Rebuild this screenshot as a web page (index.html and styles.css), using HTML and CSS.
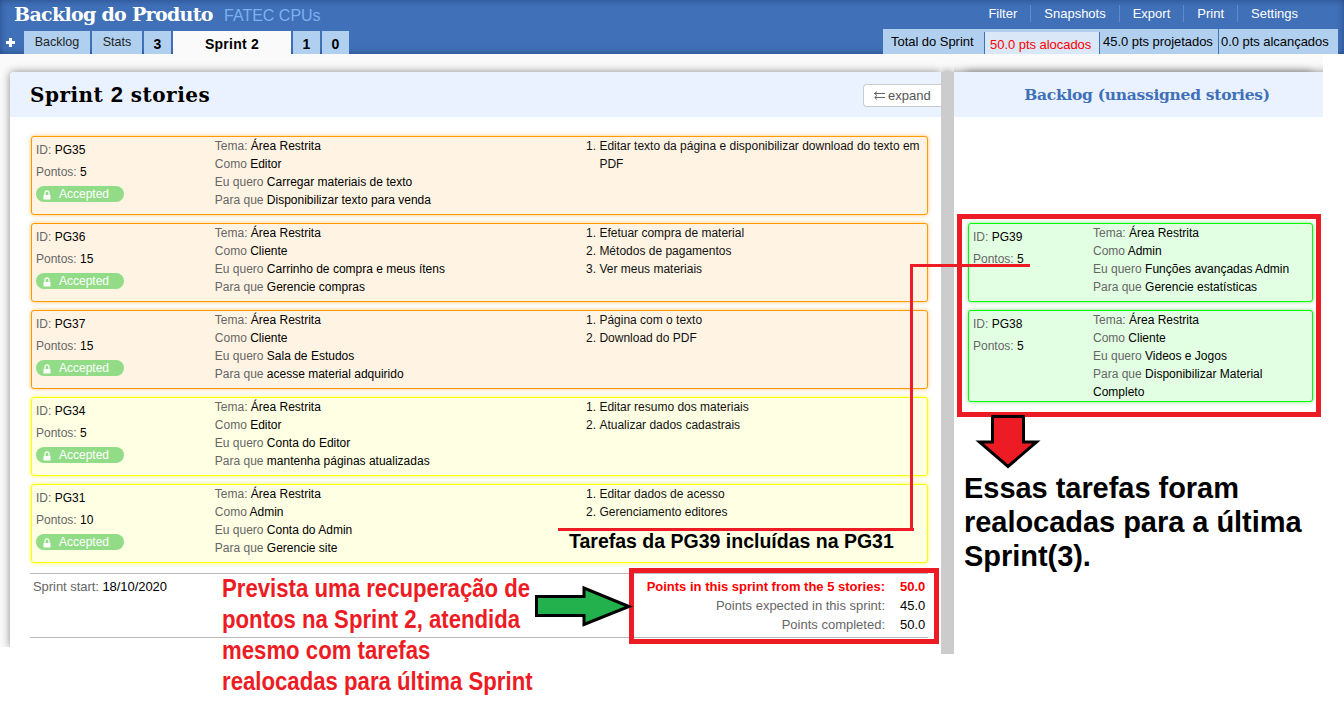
FILE: index.html
```html
<!DOCTYPE html>
<html lang="pt-BR">
<head>
<meta charset="utf-8">
<title>Backlog do Produto</title>
<link rel="stylesheet" href="styles.css">
</head>
<body>
<svg class="defs" width="0" height="0"><symbol id="lock" viewBox="0 0 8 10"><path d="M2 5V3.2C2 1.8 2.8 1 4 1s2 .8 2 2.2V5" fill="none" stroke="#fff" stroke-opacity=".85" stroke-width="1.5"/><path d="M.5 5h7v4.500h-7z" fill="#fff"/></symbol></svg>
<header class="header">
  <div class="top">
    <h1 class="title">Backlog do Produto</h1><span class="project">FATEC CPUs</span>
    <nav class="menu"><a>Filter</a><a>Snapshots</a><a>Export</a><a>Print</a><a>Settings</a></nav>
  </div>
  <div class="bar">
    <div class="tabs">
      <span class="add"><svg width="9" height="9" viewBox="0 0 9 9"><path d="M0 4.5h9M4.5 0v9" stroke="#fff" stroke-width="3"/></svg></span>
      <span class="tab backlog-tab">Backlog</span><span class="tab stats-tab">Stats</span><span class="tab num">3</span><span class="tab current">Sprint 2</span><span class="tab num">1</span><span class="tab num">0</span>
    </div>
    <div class="totals"><span class="total label">Total do Sprint</span><span class="total allocated">50.0 pts alocados</span><span class="total projected">45.0 pts projetados</span><span class="total reached">0.0 pts alcançados</span></div>
  </div>
</header>
<main class="workspace">
  <section class="sprint">
    <div class="panel-head"><h2 class="heading">Sprint <span class="digit">2</span> stories</h2><span class="expand"><svg width="11" height="9" viewBox="0 0 11 9"><path d="M0 2.5h11M1 6.5h10M3 .5L.7 2.5 3 4.5M3 4.5L.7 6.5 3 8.5" fill="none" stroke="#666"/></svg>expand</span></div>
    <div class="stories">
      <article class="card orange"><div class="meta"><p>ID: <b>PG35</b></p><p>Pontos: <b>5</b></p><span class="badge"><svg width="8" height="10"><use href="#lock"/></svg>Accepted</span></div><div class="story"><p>Tema: <b>Área Restrita</b></p><p>Como <b>Editor</b></p><p>Eu quero <b>Carregar materiais de texto</b></p><p>Para que <b>Disponibilizar texto para venda</b></p></div><ol class="criteria"><li>Editar texto da página e disponibilizar download do texto em PDF</li></ol></article>
      <article class="card orange"><div class="meta"><p>ID: <b>PG36</b></p><p>Pontos: <b>15</b></p><span class="badge"><svg width="8" height="10"><use href="#lock"/></svg>Accepted</span></div><div class="story"><p>Tema: <b>Área Restrita</b></p><p>Como <b>Cliente</b></p><p>Eu quero <b>Carrinho de compra e meus ítens</b></p><p>Para que <b>Gerencie compras</b></p></div><ol class="criteria"><li>Efetuar compra de material</li><li>Métodos de pagamentos</li><li>Ver meus materiais</li></ol></article>
      <article class="card orange"><div class="meta"><p>ID: <b>PG37</b></p><p>Pontos: <b>15</b></p><span class="badge"><svg width="8" height="10"><use href="#lock"/></svg>Accepted</span></div><div class="story"><p>Tema: <b>Área Restrita</b></p><p>Como <b>Cliente</b></p><p>Eu quero <b>Sala de Estudos</b></p><p>Para que <b>acesse material adquirido</b></p></div><ol class="criteria"><li>Página com o texto</li><li>Download do PDF</li></ol></article>
      <article class="card yellow"><div class="meta"><p>ID: <b>PG34</b></p><p>Pontos: <b>5</b></p><span class="badge"><svg width="8" height="10"><use href="#lock"/></svg>Accepted</span></div><div class="story"><p>Tema: <b>Área Restrita</b></p><p>Como <b>Editor</b></p><p>Eu quero <b>Conta do Editor</b></p><p>Para que <b>mantenha páginas atualizadas</b></p></div><ol class="criteria"><li>Editar resumo dos materiais</li><li>Atualizar dados cadastrais</li></ol></article>
      <article class="card yellow"><div class="meta"><p>ID: <b>PG31</b></p><p>Pontos: <b>10</b></p><span class="badge"><svg width="8" height="10"><use href="#lock"/></svg>Accepted</span></div><div class="story"><p>Tema: <b>Área Restrita</b></p><p>Como <b>Admin</b></p><p>Eu quero <b>Conta do Admin</b></p><p>Para que <b>Gerencie site</b></p></div><ol class="criteria"><li>Editar dados de acesso</li><li>Gerenciamento editores</li></ol></article>
    </div>
    <footer class="summary">
      <p class="start">Sprint start: <b>18/10/2020</b></p>
      <div class="points"><span class="over">Points in this sprint from the 5 stories:</span><strong class="over">50.0</strong><span>Points expected in this sprint:</span><b>45.0</b><span>Points completed:</span><b>50.0</b></div>
    </footer>
  </section>
  <div class="splitter"></div>
  <section class="backlog">
    <div class="panel-head side"><h2 class="side-heading">Backlog (unassigned stories)</h2></div>
    <div class="unassigned">
      <article class="card green"><div class="meta"><p>ID: <b>PG39</b></p><p>Pontos: <b>5</b></p></div><div class="story"><p>Tema: <b>Área Restrita</b></p><p>Como <b>Admin</b></p><p>Eu quero <b>Funções avançadas Admin</b></p><p>Para que <b>Gerencie estatísticas</b></p></div></article>
      <article class="card green tall"><div class="meta"><p>ID: <b>PG38</b></p><p>Pontos: <b>5</b></p></div><div class="story"><p>Tema: <b>Área Restrita</b></p><p>Como <b>Cliente</b></p><p>Eu quero <b>Videos e Jogos</b></p><p>Para que <b>Disponibilizar Material</b></p><p><b>Completo</b></p></div></article>
    </div>
  </section>
</main>
<svg class="marks" width="1344" height="721" viewBox="0 0 1344 721">
  <g fill="none" stroke="#ed1c24">
    <path d="M959.5 216.5h359v198h-359z" stroke-width="5"/>
    <path d="M631.5 570.5h305v71h-305z" stroke-width="5"/>
    <path d="M1030 265.500H911.500V529.500M914 529.500H558" stroke-width="3"/>
  </g>
  <path d="M992.500 416.500h31v25.500h13l-28.500 24.500-28.500-24.500h13z" fill="#ed1c24" stroke="#000" stroke-width="3"/>
  <path d="M536.500 596.500h47.500v-8.500l45 18.500-45 18v-9h-47.500z" fill="#22b14c" stroke="#000" stroke-width="3"/>
</svg>
<p class="note moved"><span>Essas tarefas foram</span><br><span>realocadas para a última</span><br><span>Sprint(3).</span></p>
<p class="note included">Tarefas da PG39 incluídas na PG31</p>
<p class="note recovery">Prevista uma recuperação de<br>pontos na Sprint 2, atendida<br>mesmo com tarefas<br>realocadas para última Sprint</p>
</body>
</html>
```
FILE: styles.css
```css
* { box-sizing: border-box; }
body { margin: 0; width: 1344px; height: 721px; overflow: hidden; position: relative; background: #fff; font: 12px/18px "Liberation Sans", Arial, sans-serif; color: #000; }
h1, h2, p, ol { margin: 0; padding: 0; }
b { font-weight: normal; color: #000; }
.defs { position: absolute; }
.header { height: 54px; background: #4070b8; box-shadow: inset 0 0 7px rgba(20, 45, 95, .6); display: flex; flex-direction: column; justify-content: space-between; }
.top { display: flex; height: 29px; align-items: center; padding-left: 14px; color: #fff; }
.title { font: bold 19px/29px "DejaVu Serif", serif; width: 210px; white-space: nowrap; letter-spacing: -.68px; }
.project { font-size: 16px; color: #7cb1f0; padding-top: 2px; }
.menu { margin-left: auto; padding: 0 33px 2px 0; display: flex; font-size: 13px; }
.menu a { padding: 0 13px; border-left: 1px solid #5d8bcd; line-height: 17px; }
.menu a:first-child { border: 0; }
.bar { display: flex; justify-content: space-between; align-items: flex-end; padding-right: 6px; }
.tabs { display: flex; gap: 2px; padding-left: 5px; }
.add { width: 17px; height: 23px; display: flex; align-items: center; padding-left: 1px; }
.tab { height: 23px; background: #b1d0f0; text-align: center; line-height: 23px; color: #222; font-size: 12.500px; }
.backlog-tab { width: 66px; }
.stats-tab { width: 50px; }
.num { width: 27px; font-size: 14px; font-weight: bold; line-height: 26px; color: #000; }
.current { width: 118px; background: #fafafa; font-size: 14px; font-weight: bold; line-height: 26px; color: #000; letter-spacing: .25px; }
.totals { display: flex; height: 25px; background: #b1d0f0; }
.total { white-space: nowrap; line-height: 25px; font-size: 13px; letter-spacing: -.04px; }
.label { width: 101px; padding-left: 8px; }
.allocated { width: 116px; margin-top: 3px; padding-left: 5px; background: #d9e7f7; border: solid #4070b8; border-width: 0 1px; color: #f00; }
.projected { width: 118px; padding-left: 3px; }
.reached { width: 120px; border-left: 1px solid #4070b8; padding-left: 2px; }
.workspace { width: 1323px; height: 600px; padding: 18px 0 0 10px; display: flex; background: linear-gradient(#fafafa, #fafafa) 0 0 / 1323px 593px no-repeat; clip-path: inset(0); }
.sprint { width: 931px; height: 575px; background: #fff; border-radius: 4px 0 0; box-shadow: 0 0 8px #888; clip-path: inset(-12px 0 0 -12px); }
.splitter { width: 13px; height: 582px; background: #ccc; box-shadow: 0 0 8px #888; clip-path: inset(-12px 0 0 0); }
.backlog { width: 369px; height: 575px; background: #fff; box-shadow: -12px 0 8px #888, 12px 0 8px #888; clip-path: inset(-12px 0 0 0); }
.panel-head { height: 45px; background: #ebf2ff; display: flex; justify-content: space-between; padding-left: 20px; border-radius: 4px 0 0; }
.heading { font: bold 20px/45px "DejaVu Serif", serif; white-space: nowrap; letter-spacing: .48px; }
.digit { font-family: "Liberation Sans", Arial, sans-serif; font-size: 22px; }
.expand { margin-top: 12px; width: 78px; height: 23px; background: #fff; border: 1px solid #ccc; border-right: 0; border-radius: 4px 0 0 4px; padding-left: 10px; display: flex; align-items: center; gap: 3px; font-size: 13px; color: #555; }
.side { justify-content: center; padding-left: 17px; border-radius: 0; }
.side-heading { font: bold 15.500px/45px "DejaVu Serif", serif; letter-spacing: -.28px; color: #4070b8; white-space: nowrap; }
.stories { display: flex; flex-direction: column; gap: 8px; padding: 19px 13px 0 21px; }
.card { height: 79px; border: 1px solid; border-radius: 3px; display: flex; padding-left: 4px; color: #666; }
.orange { border-color: #ff9900; background: #fff4e3; box-shadow: 0 0 4px rgba(255, 153, 0, .6); }
.yellow { border-color: #ff0; background: #ffffe3; box-shadow: 0 0 4px rgba(255, 255, 0, .7); }
.green { border-color: #0f0; background: #e3ffe3; box-shadow: 0 0 4px rgba(0, 200, 0, .5); }
.meta { width: 179px; padding-top: 2px; line-height: 22px; }
.badge { display: flex; align-items: center; width: 88px; height: 16px; margin-top: 3px; padding-left: 7px; gap: 8px; border-radius: 8px; background: #92dc87; color: #fff; line-height: 16px; padding-bottom: 1px; }
.badge svg { margin-top: 3px; }
.story { width: 371px; }
.criteria { width: 342px; padding-left: 14px; color: #111; }
.unassigned { display: flex; flex-direction: column; gap: 8px; padding: 106px 10px 0 14px; }
.green .meta { width: 120px; }
.green .story { width: 210px; }
.tall { height: 92px; }
.summary { margin: 10px 13px 0 20px; height: 65px; border: solid #bbb; border-width: 1px 0; display: flex; justify-content: space-between; padding: 4px 3px 0; color: #666; }
.start { font-size: 13px; letter-spacing: -.05px; }
.points { display: grid; grid-template-columns: auto 25px; column-gap: 15px; grid-auto-rows: 19px; text-align: right; white-space: nowrap; font-size: 13px; }
.points .over { color: #f00; font-weight: bold; }
.marks { position: absolute; left: 0; top: 0; }
.note { position: absolute; font-weight: bold; white-space: nowrap; }
.moved { left: 964px; top: 471px; font-size: 29px; line-height: 34px; letter-spacing: -.04px; }
.included { left: 569px; top: 530px; font-size: 19.500px; line-height: 23px; }
.recovery { left: 222px; top: 573px; font-size: 25px; line-height: 31px; color: #ed1c24; transform: scaleX(.887); transform-origin: 0 0; }
```
